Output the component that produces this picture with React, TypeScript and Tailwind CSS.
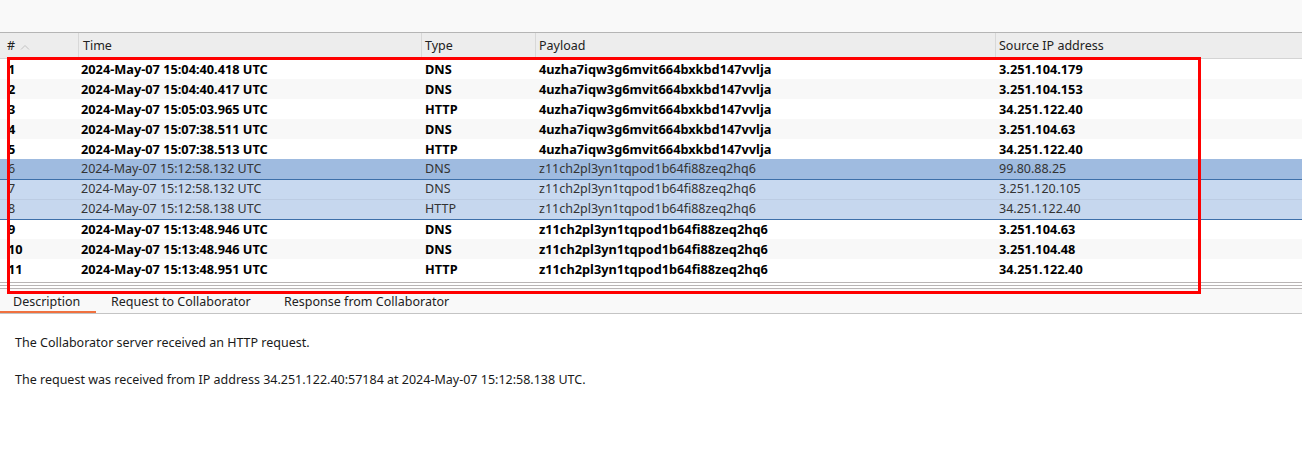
import React from "react";

type Row = { n: number; time: string; type: string; payload: string; ip: string };

const rows: Row[] = [
  { n: 1, time: "2024-May-07 15:04:40.418 UTC", type: "DNS", payload: "4uzha7iqw3g6mvit664bxkbd147vvlja", ip: "3.251.104.179" },
  { n: 2, time: "2024-May-07 15:04:40.417 UTC", type: "DNS", payload: "4uzha7iqw3g6mvit664bxkbd147vvlja", ip: "3.251.104.153" },
  { n: 3, time: "2024-May-07 15:05:03.965 UTC", type: "HTTP", payload: "4uzha7iqw3g6mvit664bxkbd147vvlja", ip: "34.251.122.40" },
  { n: 4, time: "2024-May-07 15:07:38.511 UTC", type: "DNS", payload: "4uzha7iqw3g6mvit664bxkbd147vvlja", ip: "3.251.104.63" },
  { n: 5, time: "2024-May-07 15:07:38.513 UTC", type: "HTTP", payload: "4uzha7iqw3g6mvit664bxkbd147vvlja", ip: "34.251.122.40" },
  { n: 6, time: "2024-May-07 15:12:58.132 UTC", type: "DNS", payload: "z11ch2pl3yn1tqpod1b64fi88zeq2hq6", ip: "99.80.88.25" },
  { n: 7, time: "2024-May-07 15:12:58.132 UTC", type: "DNS", payload: "z11ch2pl3yn1tqpod1b64fi88zeq2hq6", ip: "3.251.120.105" },
  { n: 8, time: "2024-May-07 15:12:58.138 UTC", type: "HTTP", payload: "z11ch2pl3yn1tqpod1b64fi88zeq2hq6", ip: "34.251.122.40" },
  { n: 9, time: "2024-May-07 15:13:48.946 UTC", type: "DNS", payload: "z11ch2pl3yn1tqpod1b64fi88zeq2hq6", ip: "3.251.104.63" },
  { n: 10, time: "2024-May-07 15:13:48.946 UTC", type: "DNS", payload: "z11ch2pl3yn1tqpod1b64fi88zeq2hq6", ip: "3.251.104.48" },
  { n: 11, time: "2024-May-07 15:13:48.951 UTC", type: "HTTP", payload: "z11ch2pl3yn1tqpod1b64fi88zeq2hq6", ip: "34.251.122.40" },
];

function rowClass(r: Row, i: number) {
  if (r.n === 6) return "bg-[#9fbbe0] text-[#333] font-normal text-[12.5px]";
  if (r.n === 7) return "bg-[#c8d9f0] text-[#333] font-normal text-[12.5px] border-t border-[#3d6fa9]";
  if (r.n === 8) return "bg-[#c6d7ee] text-[#333] font-normal text-[12.5px] border-t border-[#bccce3]";
  if (r.n === 9) return "bg-white text-black font-bold text-[12.75px] border-t border-[#3d6fa9]";
  return (i % 2 === 0 ? "bg-white" : "bg-[#f8f8f8]") + " text-black font-bold text-[12.75px]";
}

export default function App() {
  return (
    <div
      className="relative w-[1302px] h-[475px] bg-white overflow-hidden text-[12.5px] text-black"
      style={{ fontFamily: '"Noto Sans", "Open Sans", sans-serif' }}
    >
      <div className="h-[33px] bg-[#f9f9f9] border-b border-[#b5b5b5]" />
      <div className="grid grid-cols-[78px_343px_114px_460px_1fr] h-[26px] bg-[#ededed] border-b border-[#d4d4d4] text-[#222]">
        <div className="flex items-center pl-[7px] pt-[2px] gap-[5px]">
          <span>#</span>
          <svg width="10" height="6" viewBox="0 0 10 6">
            <path d="M1 5.5 L5 1.5 L9 5.5" fill="none" stroke="#c2c2c2" strokeWidth="1" />
          </svg>
        </div>
        <div className="flex items-center pl-[4px] pt-[2px] border-l border-[#d8d8d8]">Time</div>
        <div className="flex items-center pl-[3px] pt-[2px] border-l border-[#d8d8d8]">Type</div>
        <div className="flex items-center pl-[3px] pt-[2px] border-l border-[#d8d8d8]">Payload</div>
        <div className="flex items-center pl-[3px] pt-[2px] border-l border-[#d8d8d8]">Source IP address</div>
      </div>
      <div>
        {rows.map((r, i) => (
          <div
            key={r.n}
            className={"grid grid-cols-[78px_343px_114px_460px_1fr] h-[20px] items-center leading-none " + rowClass(r, i)}
          >
            <div className="pl-[8px]">{r.n}</div>
            <div className="pl-[3px]">{r.time}</div>
            <div className="pl-[4px]">{r.type}</div>
            <div className="pl-[4px]">{r.payload}</div>
            <div className="pl-[4px]">{r.ip}</div>
          </div>
        ))}
      </div>
      <div className="h-[3px]" />
      <div className="border-t border-[#b9b5b5] h-[3px]" />
      <div className="border-t border-[#b9b5b5] h-[3px]" />
      <div className="border-t border-[#b9b5b5] bg-[#f9f9f9] h-[26px] border-b border-b-[#c4c4c4] flex items-stretch text-[#222]">
        <div className="relative w-[96px] flex items-center pl-[13px] pt-[2px]">
          Description
          <div className="absolute left-0 right-0 bottom-0 h-[2px] bg-[#f0713f]" />
        </div>
        <div className="flex items-center pl-[15px] pt-[2px] w-[188px]">Request to Collaborator</div>
        <div className="flex items-center pt-[2px]">Response from Collaborator</div>
      </div>
      <div className="pl-[15px] pt-[20px] text-[#1a1a1a]">
        <p className="h-[18px] leading-[18px]">The Collaborator server received an HTTP request.</p>
        <p className="h-[18px] leading-[18px] mt-[19px]">
          The request was received from IP address 34.251.122.40:57184 at 2024-May-07 15:12:58.138 UTC.
        </p>
      </div>
      <div className="absolute left-[7px] top-[57px] w-[1194px] h-[237px] border-[3px] border-[#ff0000] pointer-events-none" />
    </div>
  );
}
